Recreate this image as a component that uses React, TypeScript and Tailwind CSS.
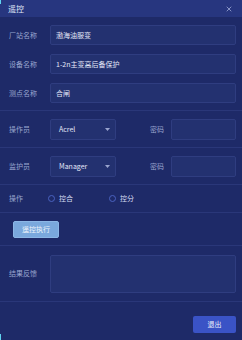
import { X } from 'lucide-react';

const font = { fontFamily: '"Noto Sans CJK SC", "Noto Sans", sans-serif' };

function Field({ label, value }: { label: string; value: string }) {
  return (
    <div className="flex items-center h-[20px]">
      <div className="w-[50px] pl-[9px] text-[7px] text-[#9aa5cf]">{label}</div>
      <div className="flex-1 h-full rounded-[2px] border border-[#2f3d80] bg-[#233170] flex items-center pl-[5px] text-[7px] text-[#e3e8f8]">
        {value}
      </div>
    </div>
  );
}

function SelectRow({ label, value }: { label: string; value: string }) {
  return (
    <div className="flex items-center h-[37px] border-b border-[#2a3779]">
      <div className="w-[50px] pl-[9px] text-[7px] text-[#9aa5cf]">{label}</div>
      <div className="w-[66px] h-[21px] rounded-[2px] border border-[#2f3d80] bg-[#233170] flex items-center justify-between pl-[8px] pr-[5px] text-[7px] text-[#e3e8f8]">
        <span>{value}</span>
        <svg width="5" height="3" viewBox="0 0 5 3">
          <path d="M0 0h5L2.5 3z" fill="#9aa5cf" />
        </svg>
      </div>
      <div className="w-[55px] pl-[34px] text-[7px] text-[#9aa5cf]">密码</div>
      <div className="flex-1 h-[21px] mr-[6px] rounded-[2px] border border-[#2f3d80] bg-[#233170]" />
    </div>
  );
}

function Radio({ label }: { label: string }) {
  return (
    <div className="flex items-center gap-[4px] text-[7px] text-[#d6dcf2]">
      <span className="w-[7px] h-[7px] rounded-full border border-[#4a62c0]" />
      <span>{label}</span>
    </div>
  );
}

export default function App() {
  return (
    <div className="w-[242px] h-[340px] bg-[#1e2a68] flex flex-col relative overflow-hidden" style={font}>
      <div className="h-[17px] bg-[#27367f] flex items-center justify-between pl-[8px] pr-[9px] shrink-0">
        <span className="text-[8px] text-[#dfe4f6]">遥控</span>
        <X size={8} strokeWidth={2} className="text-[#b8c2e8]" />
      </div>

      <div className="flex flex-col gap-[9px] pt-[8px] pr-[6px] pb-[7px] border-b border-[#2a3779]">
        <Field label="厂站名称" value="渤海油服变" />
        <Field label="设备名称" value="1-2n主变高后备保护" />
        <Field label="测点名称" value="合闸" />
      </div>

      <SelectRow label="操作员" value="Acrel" />
      <SelectRow label="监护员" value="Manager" />

      <div className="flex items-center h-[28px] border-b border-[#2a3779]">
        <div className="w-[48px] pl-[9px] text-[7px] text-[#9aa5cf]">操作</div>
        <div className="w-[61px]">
          <Radio label="控合" />
        </div>
        <Radio label="控分" />
      </div>

      <div className="flex items-center h-[33px] pl-[13px] border-b border-[#2a3779]">
        <button className="w-[46px] h-[17px] rounded-[2px] bg-[#7aa8dd] border border-[#8cb6e6] text-[7px] text-[#eef3fb]">
          遥控执行
        </button>
      </div>

      <div className="flex items-center h-[56px] pr-[6px] border-b border-[#2a3779]">
        <div className="w-[50px] pl-[9px] text-[7px] text-[#9aa5cf]">结果反馈</div>
        <div className="flex-1 h-[38px] rounded-[2px] border border-[#2f3d80] bg-[#233170]" />
      </div>

      <div className="flex-1 flex items-end justify-end pr-[6px] pb-[7px]">
        <button className="w-[43px] h-[17px] rounded-[2px] bg-[#3a53c6] text-[7px] text-[#eef1fb]">退出</button>
      </div>

      <span className="absolute left-0 top-0 w-[1px] h-[4px] bg-[#5fd3f0]" />
      <span className="absolute left-0 bottom-0 w-[1px] h-[6px] bg-[#5fd3f0]" />
    </div>
  );
}
